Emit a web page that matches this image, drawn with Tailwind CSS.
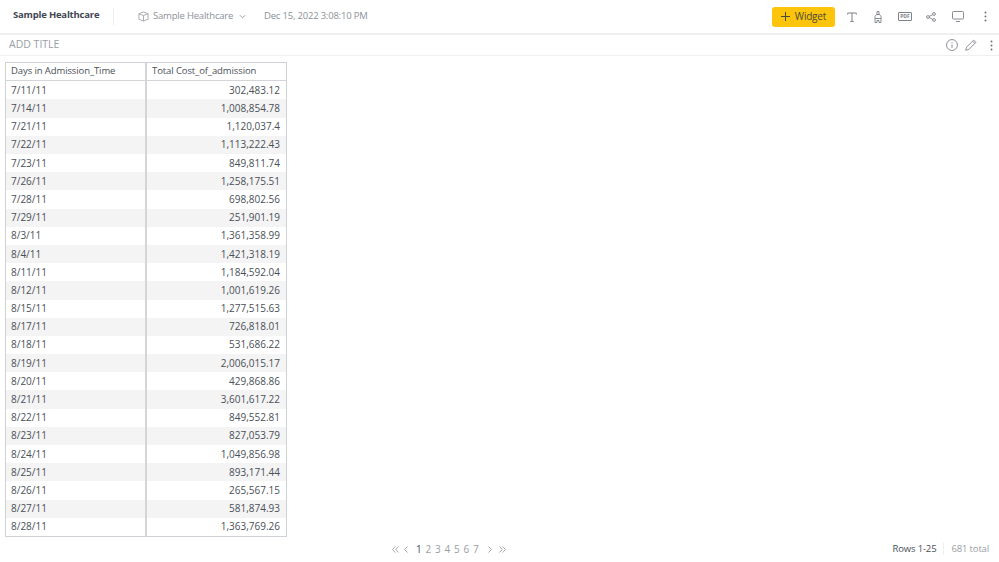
<!DOCTYPE html>
<html lang="en">
<head>
<meta charset="UTF-8">
<script src="https://cdn.jsdelivr.net/npm/@tailwindcss/browser@4"></script>
<title>Sample Healthcare</title>
</head>
<body class="w-[999px] h-[562px] overflow-hidden bg-white font-['Open_Sans',sans-serif] text-[#4a4f57] flex flex-col">
  <header class="h-[35px] flex-none flex items-center border-b-2 border-[#efefef] pl-[13px] pr-[12px]">
    <span class="text-[9.5px] tracking-[-0.2px] font-bold text-[#3f4653] w-[87px] whitespace-nowrap -mt-[2px]">Sample Healthcare</span>
    <div class="w-px h-[17px] bg-[#eeeeee] ml-[13px]"></div>
    <svg class="ml-[24px] w-[11px] h-[11px] text-[#9a9ea5]" viewBox="0 0 12 12" fill="none" stroke="currentColor" stroke-width="0.9"><path d="M6 1 L11 3 V9 L6 11 L1 9 V3 Z M1 3 L6 5 L11 3 M6 5 V11"/></svg>
    <span class="ml-[4px] w-[80px] text-[9.5px] tracking-[-0.2px] text-[#8d9199] whitespace-nowrap">Sample Healthcare</span>
    <svg class="ml-[6px] w-[7px] h-[5px] text-[#8d9199]" viewBox="0 0 8 5" fill="none" stroke="currentColor"><path d="M1 1 L4 4 L7 1"/></svg>
    <span class="ml-[18px] text-[9.5px] tracking-[-0.2px] text-[#8d9199] whitespace-nowrap">Dec 15, 2022 3:08:10 PM</span>
    <button class="ml-auto w-[63px] h-[20px] bg-[#fcc40a] rounded-[3px] flex items-center justify-center gap-[5px] text-[10px] tracking-[-0.2px] text-[#4a4a3a]">
      <svg class="w-[9px] h-[9px]" viewBox="0 0 9 9" stroke="currentColor" fill="none"><path d="M4.5 0 V9 M0 4.5 H9"/></svg>
      Widget
    </button>
    <svg class="ml-[12px] w-[10px] h-[10px] text-[#7d8189]" viewBox="0 0 10 10" fill="none" stroke="currentColor"><path d="M0.7 2.5 V1 H9.3 V2.5 M5 1 V9.5 M3.3 9.5 H6.7"/></svg>
    <svg class="ml-[17px] w-[8px] h-[12px] text-[#7d8189]" viewBox="0 0 8 12" fill="none" stroke="currentColor" stroke-width="0.9"><path d="M3 0.5 H5 V3.5 H3 Z M2.5 3.5 H5.5 L7 5.5 V11.5 H5 V9.5 H3 V11.5 H1 V5.5 Z M1 7.5 H7"/></svg>
    <div class="ml-[16px] w-[14px] h-[9px] border border-[#7d8189] rounded-[1px] flex items-center justify-center text-[5px] font-bold leading-none text-[#7d8189]">PDF</div>
    <svg class="ml-[14px] w-[10px] h-[10px] text-[#7d8189]" viewBox="0 0 10 10" fill="none" stroke="currentColor" stroke-width="0.9"><circle cx="2" cy="5" r="1.4"/><circle cx="8" cy="2" r="1.4"/><circle cx="8" cy="8" r="1.4"/><path d="M3.3 4.4 L6.7 2.6 M3.3 5.6 L6.7 7.4"/></svg>
    <svg class="ml-[16px] w-[12px] h-[11px] text-[#7d8189]" viewBox="0 0 12 11" fill="none" stroke="currentColor" stroke-width="0.9"><rect x="0.5" y="0.5" width="11" height="7.5" rx="0.8"/><path d="M4 10.5 H8"/></svg>
    <svg class="ml-[20px] w-[3px] h-[11px] text-[#6f737b]" viewBox="0 0 3 11" fill="currentColor"><circle cx="1.5" cy="1.5" r="1"/><circle cx="1.5" cy="5.5" r="1"/><circle cx="1.5" cy="9.5" r="1"/></svg>
  </header>
  <div class="h-[21px] flex-none flex items-center border-b border-[#efefef] pl-[9px] pr-[6px]">
    <span class="text-[10.5px] text-[#9a9da3]">ADD TITLE</span>
    <svg class="ml-auto w-[12px] h-[12px] text-[#7d8189]" viewBox="0 0 11 11" fill="none" stroke="currentColor" stroke-width="0.8"><circle cx="5.5" cy="5.5" r="5"/><path d="M5.5 5 V8.2 M5.5 2.8 V3.8"/></svg>
    <svg class="ml-[7px] w-[12px] h-[12px] text-[#7d8189]" viewBox="0 0 11 11" fill="none" stroke="currentColor" stroke-width="0.8"><path d="M0.7 10.3 L1.4 7.5 L8 1 L10 3 L3.5 9.6 Z M7 2 L9 4"/></svg>
    <svg class="ml-[13px] w-[3px] h-[11px] text-[#6f737b]" viewBox="0 0 3 11" fill="currentColor"><circle cx="1.5" cy="1.5" r="1"/><circle cx="1.5" cy="5.5" r="1"/><circle cx="1.5" cy="9.5" r="1"/></svg>
  </div>
  <main class="flex-1 pt-[6px] pl-[5px]">
    <div id="grid" class="w-[282px] h-[475px] border border-[#ced1d6] grid grid-cols-[141px_139px] grid-rows-[repeat(26,1fr)] text-[10px]">
      <div class="border-b border-r-2 border-[#d3d5d9] flex items-center pl-[5px] text-[9.5px] tracking-[-0.1px] font-medium text-[#4a4f57]">Days in Admission_Time</div>
      <div class="border-b border-[#d3d5d9] flex items-center pl-[5px] text-[9.5px] tracking-[-0.1px] font-medium text-[#4a4f57]">Total Cost_of_admission</div>
    </div>
  </main>
  <footer class="h-[26px] flex-none relative flex items-center justify-end pr-[10px] text-[9.5px] tracking-[-0.15px] -mt-[1px]">
    <span class="text-[#4a4f57]">Rows 1-25</span>
    <div class="w-px h-[12px] bg-[#eeeeee] mx-[7px]"></div>
    <span class="text-[#9a9da3]">681 total</span>
    <div class="absolute left-[392px] top-0 h-full flex items-center text-[10px] tracking-normal text-[#9a9da3]">
      <svg class="w-[7px] h-[7px]" viewBox="0 0 7 7" fill="none" stroke="currentColor" stroke-width="0.9"><path d="M3.3 0.5 L0.5 3.5 L3.3 6.5 M6.5 0.5 L3.7 3.5 L6.5 6.5"/></svg>
      <svg class="ml-[5px] w-[4px] h-[7px]" viewBox="0 0 4 7" fill="none" stroke="currentColor" stroke-width="0.9"><path d="M3.5 0.5 L0.5 3.5 L3.5 6.5"/></svg>
      <span class="ml-[6px] w-[9.5px] text-center text-[#4a4f57]">1</span>
      <span class="w-[9.5px] text-center">2</span>
      <span class="w-[9.5px] text-center">3</span>
      <span class="w-[9.5px] text-center">4</span>
      <span class="w-[9.5px] text-center">5</span>
      <span class="w-[9.5px] text-center">6</span>
      <span class="w-[9.5px] text-center">7</span>
      <svg class="ml-[7px] w-[4px] h-[7px]" viewBox="0 0 4 7" fill="none" stroke="currentColor" stroke-width="0.9"><path d="M0.5 0.5 L3.5 3.5 L0.5 6.5"/></svg>
      <svg class="ml-[7px] w-[7px] h-[7px]" viewBox="0 0 7 7" fill="none" stroke="currentColor" stroke-width="0.9"><path d="M0.5 0.5 L3.3 3.5 L0.5 6.5 M3.7 0.5 L6.5 3.5 L3.7 6.5"/></svg>
    </div>
  </footer>
  <script>
    const rows = [
      ["7/11/11","302,483.12"],["7/14/11","1,008,854.78"],["7/21/11","1,120,037.4"],["7/22/11","1,113,222.43"],
      ["7/23/11","849,811.74"],["7/26/11","1,258,175.51"],["7/28/11","698,802.56"],["7/29/11","251,901.19"],
      ["8/3/11","1,361,358.99"],["8/4/11","1,421,318.19"],["8/11/11","1,184,592.04"],["8/12/11","1,001,619.26"],
      ["8/15/11","1,277,515.63"],["8/17/11","726,818.01"],["8/18/11","531,686.22"],["8/19/11","2,006,015.17"],
      ["8/20/11","429,868.86"],["8/21/11","3,601,617.22"],["8/22/11","849,552.81"],["8/23/11","827,053.79"],
      ["8/24/11","1,049,856.98"],["8/25/11","893,171.44"],["8/26/11","265,567.15"],["8/27/11","581,874.93"],
      ["8/28/11","1,363,769.26"]
    ];
    const grid = document.getElementById("grid");
    rows.forEach((r, i) => {
      const bg = i % 2 ? "bg-[#f4f4f4]" : "bg-white";
      const a = document.createElement("div");
      a.className = "border-r-2 border-[#d3d5d9] flex items-center pl-[5px] " + bg;
      a.textContent = r[0];
      const b = document.createElement("div");
      b.className = "flex items-center justify-end pr-[6px] " + bg;
      b.textContent = r[1];
      grid.appendChild(a);
      grid.appendChild(b);
    });
  </script>
</body>
</html>
